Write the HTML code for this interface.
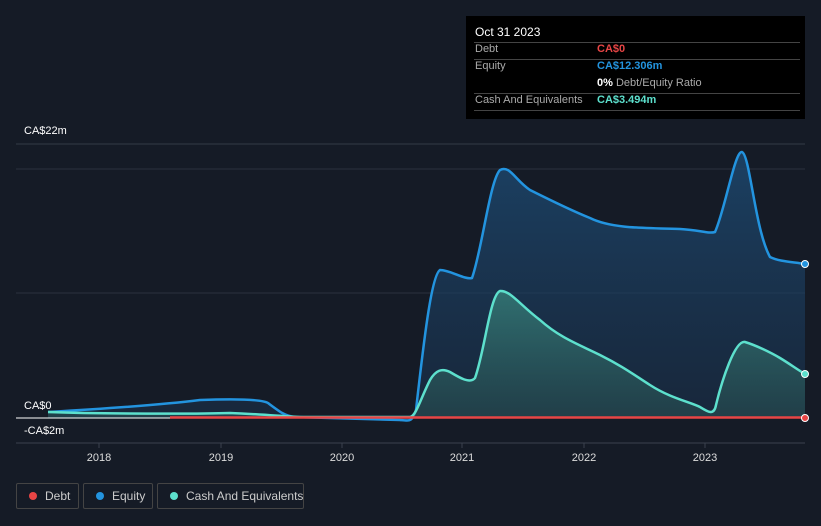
<!DOCTYPE html>
<html><head><style>
html,body{margin:0;width:821px;height:526px;overflow:hidden}
body{background:#151b26;font-family:"Liberation Sans",sans-serif;position:relative}
.t{position:absolute;color:#fff;font-size:11px}
.tip{position:absolute;left:466px;top:16px;width:339px;height:103px;background:#000;}
.tip .r{position:absolute;left:8px;width:326px;border-top:1px solid #444}
.tip span{position:absolute;font-size:11px;white-space:nowrap}
.lg{position:absolute;top:483px;height:26px;border:1px solid #444;border-radius:2px;color:#ccc;font-size:12px;line-height:24px;box-sizing:border-box;white-space:nowrap}
.lg i{position:absolute;left:12px;top:8px;width:8px;height:8px;border-radius:50%}
</style></head><body>
<div class="tip">
<span style="left:9px;top:9px;color:#fff;font-size:12px">Oct 31 2023</span>
<div class="r" style="top:26px"></div>
<span style="left:9px;top:27px;color:#aaa">Debt</span><span style="left:131px;top:27px;color:#e84545;font-weight:bold">CA$0</span>
<div class="r" style="top:43px"></div>
<span style="left:9px;top:44px;color:#aaa">Equity</span><span style="left:131px;top:44px;color:#2394df;font-weight:bold">CA$12.306m</span>
<span style="left:131px;top:61px;color:#aaa"><b style="color:#fff">0%</b> Debt/Equity Ratio</span>
<div class="r" style="top:77px"></div>
<span style="left:9px;top:78px;color:#aaa">Cash And Equivalents</span><span style="left:131px;top:78px;color:#5de0cd;font-weight:bold">CA$3.494m</span>
<div class="r" style="top:94px"></div>
</div>
<div class="t" style="left:24px;top:125px">CA$22m</div>
<div class="t" style="left:24px;top:400px">CA$0</div>
<div class="t" style="left:24px;top:425px">-CA$2m</div>
<svg style="position:absolute;left:0;top:0" width="821" height="526">
<defs>
<linearGradient id="ge" x1="0" y1="0" x2="0" y2="1"><stop offset="0" stop-color="#1d4a72" stop-opacity=".8"/><stop offset="1" stop-color="#1a3350" stop-opacity=".5"/></linearGradient>
<linearGradient id="gc" x1="0" y1="0" x2="0" y2="1"><stop offset="0" stop-color="#3a8a80" stop-opacity=".7"/><stop offset="1" stop-color="#2a5555" stop-opacity=".5"/></linearGradient>
</defs>
<line x1="16" y1="144" x2="805" y2="144" stroke="#333b47"/>
<line x1="16" y1="169" x2="805" y2="169" stroke="#2a323e"/>
<line x1="16" y1="293" x2="805" y2="293" stroke="#2a323e"/>
<line x1="16" y1="443" x2="805" y2="443" stroke="#3a424e"/>
<g stroke="#3a424e"><line x1="99" y1="443" x2="99" y2="448"/><line x1="221" y1="443" x2="221" y2="448"/><line x1="342" y1="443" x2="342" y2="448"/><line x1="462" y1="443" x2="462" y2="448"/><line x1="584" y1="443" x2="584" y2="448"/><line x1="705" y1="443" x2="705" y2="448"/></g>
<g fill="#ddd" font-size="11" text-anchor="middle" font-family="Liberation Sans"><text x="99" y="461">2018</text><text x="221" y="461">2019</text><text x="342" y="461">2020</text><text x="462" y="461">2021</text><text x="584" y="461">2022</text><text x="705" y="461">2023</text></g>
<path d="M48,412 C100,409 160,405 200,400 C230,399 262,399 268,403 C280,412 285,416 295,417 L400,420 C410,421 412,422 416,410 C425,330 432,275 440,270 C450,270 465,280 472,278 C482,250 490,180 500,170 C510,165 515,180 530,190 C550,200 570,210 590,218 C610,228 640,228 680,229 C700,230 708,234 715,232 C725,210 735,150 742,152 C750,155 755,230 770,257 C780,262 795,262 805,264 L805,418 L48,418 Z" fill="url(#ge)"/>
<path d="M48,412 C100,409 160,405 200,400 C230,399 262,399 268,403 C280,412 285,416 295,417 L400,420 C410,421 412,422 416,410 C425,330 432,275 440,270 C450,270 465,280 472,278 C482,250 490,180 500,170 C510,165 515,180 530,190 C550,200 570,210 590,218 C610,228 640,228 680,229 C700,230 708,234 715,232 C725,210 735,150 742,152 C750,155 755,230 770,257 C780,262 795,262 805,264" fill="none" stroke="#2394df" stroke-width="2.5"/>
<path d="M48,412 C100,414 200,414 230,413 C260,414 290,417 300,417 L410,417 C416,416 420,400 430,380 C436,370 442,368 450,372 C460,378 470,384 475,378 C485,350 490,295 500,291 C510,290 520,305 540,320 C560,338 580,345 600,355 C620,365 630,372 650,385 C670,398 690,402 700,407 C708,412 714,416 716,405 C722,380 735,340 745,342 C755,345 770,352 780,358 C790,364 798,370 805,374 L805,418 L48,418 Z" fill="url(#gc)"/>
<path d="M48,412 C100,414 200,414 230,413 C260,414 290,417 300,417 L410,417 C416,416 420,400 430,380 C436,370 442,368 450,372 C460,378 470,384 475,378 C485,350 490,295 500,291 C510,290 520,305 540,320 C560,338 580,345 600,355 C620,365 630,372 650,385 C670,398 690,402 700,407 C708,412 714,416 716,405 C722,380 735,340 745,342 C755,345 770,352 780,358 C790,364 798,370 805,374" fill="none" stroke="#5de0cd" stroke-width="2.5"/>
<line x1="16" y1="418" x2="170" y2="418" stroke="#fff" stroke-width="1"/>
<line x1="170" y1="417.5" x2="805" y2="417.5" stroke="#e84545" stroke-width="2.5"/>
<circle cx="805" cy="264" r="3.5" fill="#2394df" stroke="#fff" stroke-width="1"/>
<circle cx="805" cy="374" r="3.5" fill="#5de0cd" stroke="#fff" stroke-width="1"/>
<circle cx="805" cy="418" r="3.5" fill="#e84545" stroke="#fff" stroke-width="1"/>
</svg>
<div class="lg" style="left:16px;width:63px"><i style="background:#e84545"></i><span style="position:absolute;left:28px">Debt</span></div>
<div class="lg" style="left:83px;width:70px"><i style="background:#2394df"></i><span style="position:absolute;left:28px">Equity</span></div>
<div class="lg" style="left:157px;width:147px"><i style="background:#5de0cd"></i><span style="position:absolute;left:28px">Cash And Equivalents</span></div>
</body></html>
